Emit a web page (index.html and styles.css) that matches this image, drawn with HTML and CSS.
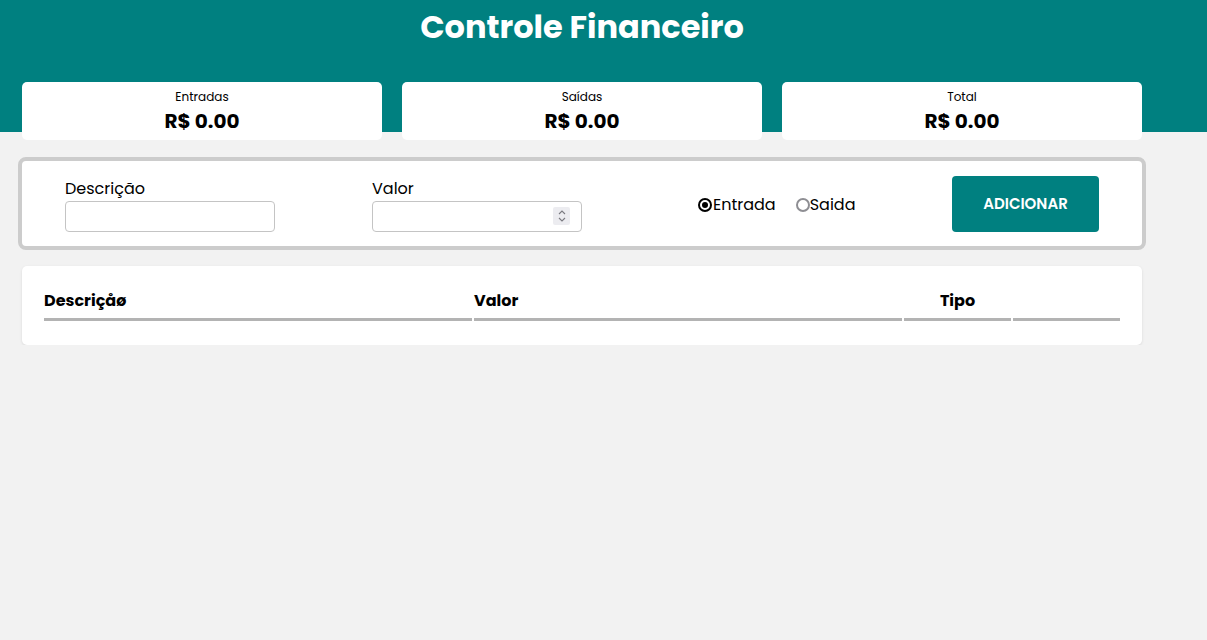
FILE: index.html
```html
<!DOCTYPE html>
<html lang="pt-BR">
<head>
<meta charset="utf-8">
<title>Controle Financeiro</title>
<link rel="stylesheet" href="styles.css">
</head>
<body>
<header class="header">
  <h1 class="title">Controle Financeiro</h1>
</header>
<main class="container">
  <section class="summary">
    <div class="card">
      <span class="card-label">Entradas</span>
      <span class="card-value">R$ 0.00</span>
    </div>
    <div class="card">
      <span class="card-label">Saídas</span>
      <span class="card-value">R$ 0.00</span>
    </div>
    <div class="card">
      <span class="card-label">Total</span>
      <span class="card-value">R$ 0.00</span>
    </div>
  </section>

  <form class="form">
    <div class="field">
      <label class="field-label">Descrição</label>
      <div class="input-box"><input class="input" type="text"></div>
    </div>
    <div class="field">
      <label class="field-label">Valor</label>
      <div class="input-box">
        <input class="input" type="text">
        <span class="spinner">
          <svg width="10" height="14" viewBox="0 0 10 14"><path d="M2 5 L5 2 L8 5" fill="none" stroke="#7a7a80" stroke-width="1.1"/><path d="M2 9 L5 12 L8 9" fill="none" stroke="#7a7a80" stroke-width="1.1"/></svg>
        </span>
      </div>
    </div>
    <div class="radios">
      <label class="radio-item"><span class="radio checked"></span>Entrada</label>
      <label class="radio-item"><span class="radio"></span>Saida</label>
    </div>
    <button class="btn" type="button">ADICIONAR</button>
  </form>

  <section class="table-card">
    <table class="table">
      <thead>
        <tr>
          <th class="th-left col-wide">Descriçåø</th>
          <th class="th-left col-wide">Valor</th>
          <th class="th-center col-narrow">Tipo</th>
          <th class="th-center col-narrow"></th>
        </tr>
      </thead>
    </table>
  </section>
</main>
</body>
</html>
```

FILE: styles.css
```css
* { box-sizing: border-box; }

body {
  margin: 0;
  background: #f2f2f2;
  font-family: "Poppins", "Noto Sans", "Open Sans", sans-serif;
  color: #000;
}

.header {
  background: #008080;
  height: 132px;
  padding-top: 6px;
}

.title {
  margin: 0;
  width: 1120px;
  margin-left: 22px;
  text-align: center;
  color: #fff;
  font-size: 32px;
  font-weight: 700;
  line-height: 42px;
}

.container {
  width: 1120px;
  margin-left: 22px;
}

.summary {
  display: flex;
  gap: 20px;
  margin-top: -50px;
}

.card {
  flex: 1;
  height: 58px;
  background: #fff;
  border-radius: 5px;
  display: flex;
  flex-direction: column;
  align-items: center;
  padding-top: 6px;
}

.card-label {
  font-size: 12px;
  line-height: 17px;
  margin-bottom: 2px;
}

.card-value {
  font-size: 20px;
  font-weight: 700;
  line-height: 28px;
}

.form {
  margin: 17px -4px 0;
  height: 93px;
  background: #fff;
  border: 4px solid #cccccc;
  border-radius: 8px;
  display: flex;
  align-items: center;
  padding: 0 43px 0 43px;
}

.field {
  width: 210px;
  display: flex;
  flex-direction: column;
  padding-top: 2px;
}

.field + .field { margin-left: 97px; }

.field-label {
  font-size: 16px;
  line-height: 22px;
  margin-bottom: 1px;
}

.input-box {
  height: 31px;
  border: 1px solid #c4c4c4;
  border-radius: 4px;
  background: #fff;
  display: flex;
  align-items: center;
  padding-right: 11px;
}

.input {
  flex: 1;
  min-width: 0;
  height: 100%;
  border: none;
  outline: none;
  background: transparent;
  font: inherit;
}

.spinner {
  width: 17px;
  height: 18px;
  background: #ececf0;
  border-radius: 2px;
  display: flex;
  align-items: center;
  justify-content: center;
}

.radios {
  margin-left: 116px;
  padding-top: 2px;
  display: flex;
  gap: 20px;
}

.radio-item {
  display: flex;
  align-items: center;
  font-size: 16px;
  line-height: 22px;
}

.radio {
  width: 14px;
  height: 14px;
  border: 2px solid #8e8e93;
  border-radius: 50%;
  margin-right: 0;
  background: #fff;
  display: inline-flex;
  align-items: center;
  justify-content: center;
}

.radio.checked {
  border-color: #000;
  margin-right: 1px;
}

.radio.checked::after {
  content: "";
  width: 6px;
  height: 6px;
  border-radius: 50%;
  background: #000;
}

.btn {
  margin-left: auto;
  width: 147px;
  height: 56px;
  background: #008080;
  color: #fff;
  border: none;
  border-radius: 4px;
  font-family: inherit;
  font-size: 15px;
  font-weight: 600;
}

.table-card {
  margin-top: 16px;
  background: #fff;
  border-radius: 5px;
  box-shadow: 0 1px 3px rgba(0,0,0,0.1);
  padding: 18px 20px 22px;
}

.table {
  width: 100%;
  border-spacing: 2px;
  table-layout: fixed;
}

.table th {
  font-size: 16px;
  font-weight: 700;
  line-height: 22px;
  padding: 4px 0 6px;
  border-bottom: 3px solid #b3b3b3;
}

.col-wide { width: 428px; }
.col-narrow { width: 107px; }

.th-left { text-align: left; }
.th-center { text-align: center; }
```
